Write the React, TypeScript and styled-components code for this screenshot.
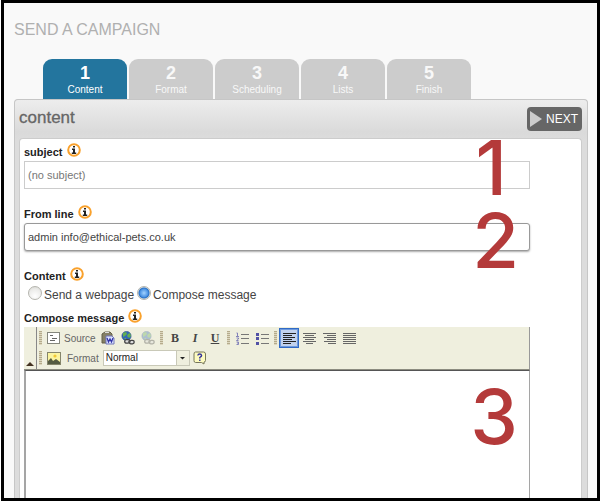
import React, { useState } from "react";
import styled, { createGlobalStyle } from "styled-components";

const GlobalStyle = createGlobalStyle`
  *, *::before, *::after { box-sizing: border-box; }
  body { margin: 0; background: #fff; font-family: "Liberation Sans", Arial, sans-serif; color: #444; }
  button, input, select, textarea { font-family: inherit; margin: 0; }
`;

const Page = styled.div`
  position: relative;
  display: flex;
  flex-direction: column;
  min-height: 100vh;
  margin-left: 1px;
  border: 3px solid #000;
  background: #f9f9f9;
  padding: 0 9px 0 10px;
`;

const Title = styled.h1`
  margin: 0;
  padding: 16px 0 0;
  height: 56px;
  font-size: 16px;
  line-height: 22px;
  font-weight: 400;
  color: #b0b0b0;
`;

const Tabs = styled.nav`
  display: flex;
  gap: 2px;
  padding-left: 29px;
`;

const Tab = styled.button<{ $active: boolean }>`
  display: flex;
  flex-direction: column;
  align-items: center;
  width: 84px;
  height: 40px;
  padding: 4px 0 0;
  border: 0;
  border-radius: 9px 9px 0 0;
  background: ${(p) => (p.$active ? "#23759e" : "#ccc")};
  color: ${(p) => (p.$active ? "#fff" : "#f8f8f8")};
  font-size: 10px;
  line-height: 14px;
`;

const TabNumber = styled.strong`
  font-size: 18px;
  line-height: 20px;
`;

const Panel = styled.section`
  flex: 1;
  display: flex;
  flex-direction: column;
  border: 1px solid #c6c6c6;
  border-bottom: 0;
  border-radius: 4px 4px 0 0;
  background: #dcdcdc linear-gradient(#ededed, #dadada 32px, #dcdcdc 40px) no-repeat;
  padding: 0 5px 0 4px;
`;

const PanelHeader = styled.header`
  display: flex;
  align-items: center;
  justify-content: space-between;
  height: 38px;
`;

const PanelTitle = styled.h2`
  margin: 0;
  padding-bottom: 3px;
  font-size: 17px;
  line-height: 20px;
  font-weight: 400;
  color: #666;
  -webkit-text-stroke: 0.3px #666;
`;

const NextButton = styled.button`
  display: flex;
  align-items: center;
  gap: 4px;
  height: 24px;
  padding: 0 4px 0 3px;
  border: 0;
  border-radius: 4px;
  background: #666;
  color: #fff;
  font-size: 12px;
`;

const Form = styled.form`
  flex: 1;
  display: flex;
  flex-direction: column;
  border: 1px solid #ccc;
  border-bottom: 0;
  border-radius: 4px 4px 0 0;
  background: #fff;
  padding: 0 51px 0 4px;
`;

const Field = styled.div`
  margin-bottom: 12px;
`;

const LabelRow = styled.div`
  display: flex;
  align-items: center;
  gap: 4px;
  height: 22px;
`;

const Label = styled.label`
  padding-top: 3px;
  font-size: 11px;
  line-height: 14px;
  font-weight: 700;
  color: #222;
`;

const InfoButton = styled.button`
  display: flex;
  padding: 0;
  border: 0;
  background: none;
`;

const TextInput = styled.input<{ $strong?: boolean }>`
  display: block;
  width: 100%;
  height: 28px;
  padding: 0 3px;
  border: 1px solid ${(p) => (p.$strong ? "#999" : "#ccc")};
  border-radius: ${(p) => (p.$strong ? "3px" : "0")};
  box-shadow: ${(p) => (p.$strong ? "0 1px 2px #aaa" : "none")};
  outline: 0;
  background: #fff;
  font-size: 11px;
  color: #444;
  &::placeholder { color: #777; }
`;

const Choices = styled.div`
  display: flex;
  gap: 3px;
  height: 20px;
  padding-left: 4px;
`;

const Choice = styled.label`
  display: flex;
  align-items: center;
  gap: 2px;
  font-size: 12px;
`;

const Radio = styled.input`
  appearance: none;
  width: 14px;
  height: 14px;
  margin-bottom: 4px;
  border: 1px solid #b5b5ae;
  border-radius: 50%;
  background: radial-gradient(circle at 50% 75%, #fff, #ececea 60%, #d5d5d0);
  &:checked {
    background: radial-gradient(circle, #a3d3ff 0, #4b93e4 4px, #286fc4 5px, #dce4e4 6px);
  }
`;

const Editor = styled.div`
  flex: 1;
  display: flex;
  flex-direction: column;
`;

const Toolbar = styled.div`
  display: flex;
  height: 43px;
  border-right: 1px solid #999;
  border-bottom: 1px solid #8c8c80;
  background: #efefde;
`;

const Collapse = styled.button`
  display: flex;
  align-items: flex-end;
  width: 13px;
  padding: 0 0 2px 2px;
  border: 0;
  border-right: 1px solid #888;
  background: none;
`;

const ToolRows = styled.div`
  padding-top: 1px;
`;

const ToolRow = styled.div`
  display: flex;
  align-items: center;
  height: 20px;
`;

const Grip = styled.span`
  width: 7px;
  height: 14px;
  padding: 0 2px;
  background: repeating-linear-gradient(#b5ab8c 0 1px, #ddd8c0 1px 2px) content-box;
`;

const Tool = styled.button<{ $active?: boolean }>`
  display: flex;
  align-items: center;
  justify-content: center;
  width: 20px;
  height: 20px;
  padding: 0;
  border: 1px solid ${(p) => (p.$active ? "#316ac5" : "transparent")};
  background: ${(p) => (p.$active ? "#c1d2ee" : "none")};
  box-shadow: ${(p) => (p.$active ? "inset 0 0 0 1px #6d9ade" : "none")};
`;

const SourceTool = styled(Tool)`
  width: 54px;
  gap: 4px;
  justify-content: flex-start;
  padding-left: 2px;
  font-size: 10px;
  color: #666;
`;

const Letter = styled.span<{ $kind: "bold" | "italic" | "underline" }>`
  font: 700 12px "Liberation Serif", serif;
  color: #444;
  font-style: ${(p) => (p.$kind === "italic" ? "italic" : "normal")};
  text-decoration: ${(p) => (p.$kind === "underline" ? "underline" : "none")};
`;

const FormatLabel = styled.label`
  padding: 0 4px 0 3px;
  font-size: 10px;
  color: #666;
`;

const SelectBox = styled.div`
  display: grid;
  width: 87px;
  height: 16px;
  border: 1px solid #c9c9b8;
  background: #fff;
`;

const FormatSelect = styled.select`
  grid-area: 1 / 1;
  appearance: none;
  width: 100%;
  border: 0;
  padding: 0 2px;
  background: linear-gradient(#efefde, #efefde) right / 13px 100% no-repeat;
  font-size: 10px;
  line-height: 14px;
  color: #222;
`;

const SelectArrow = styled.svg`
  grid-area: 1 / 1;
  justify-self: end;
  pointer-events: none;
`;

const Body = styled.textarea`
  display: block;
  flex: 1;
  width: 100%;
  min-height: 100px;
  resize: none;
  border: solid #a5a5a5;
  border-width: 1px 1px 0 2px;
  border-top-color: #555;
  outline: 0;
  background: #fff;
`;

const Callout = styled.span<{ $top: number; $right: number }>`
  position: absolute;
  top: ${(p) => p.$top}px;
  right: ${(p) => p.$right}px;
  font: 500 76px/56px Inter, "Liberation Sans", sans-serif;
  color: #b43a3a;
  pointer-events: none;
`;

const Info = ({ about }: { about: string }) => (
  <InfoButton type="button" aria-label={`About ${about}`}>
    <svg width="14" height="14" viewBox="0 0 14 14">
      <circle cx="7" cy="7" r="5.8" fill="#fff" stroke="#f9a12c" strokeWidth="2" />
      <path d="M6 3h2v1.6H6zM5 5.6h3v4h1.2V11H4.800V9.600H6V7H5z" fill="#222" />
    </svg>
  </InfoButton>
);

const SourceIcon = () => (
  <svg width="13" height="12" viewBox="0 0 13 12">
    <rect x=".5" y=".5" width="12" height="11" fill="#fff" stroke="#85877d" />
    <path d="M3 3.5h3M5 6.5h5M3 8.5h5" stroke="#666" />
  </svg>
);

const PasteWordIcon = () => (
  <svg width="14" height="14" viewBox="0 0 14 14">
    <path d="M1 3l3-2h5l2 2v9H1z" fill="#858065" stroke="#625e48" />
    <path d="M4 1.5h4" stroke="#ddd" />
    <path d="M5 5h6l2 2v6H5z" fill="#dce3ff" stroke="#7378b8" />
    <path d="M6 7l1.5 4L9 8l1.5 3L12 7" fill="none" stroke="#3537ab" strokeWidth="1.3" />
  </svg>
);

const LinkIcon = ({ faded }: { faded?: boolean }) => (
  <svg width="14" height="14" viewBox="0 0 14 14" opacity={faded ? 0.35 : 1}>
    <circle cx="5.5" cy="5" r="4.6" fill="#3168b6" stroke="#244987" strokeWidth=".6" />
    <path d="M2 2l3-1 1 2-2 2-2 1zM7 3l2-1 1 3-2 2-2-2zM3 7l2 0v2z" fill="#61af50" />
    <rect x="3.7" y="8.7" width="5" height="3.5" rx="1.7" fill="#ddd" stroke="#444" strokeWidth="1.3" />
    <rect x="8.2" y="9.3" width="5" height="3.5" rx="1.7" fill="#ddd" stroke="#444" strokeWidth="1.3" />
    <path d="M7 10.8h3" stroke="#555" />
  </svg>
);

const ListIcon = ({ numbered }: { numbered?: boolean }) => (
  <svg width="13" height="13" viewBox="0 0 13 13">
    <path d="M5 2.5h8M5 6.5h8M5 11.5h8" stroke="#777" />
    {numbered ? (
      <path d="M.5 1h1v3M0 4.5h3M.5 6h2v1l-2 1.5h2M.5 10h2v2.5h-2M1 11h1" fill="none" stroke="#7777b5" strokeWidth=".9" />
    ) : (
      <path d="M0 1h3v3H0zM0 5h3v3H0zM0 10h3v3H0z" fill="#5151a5" />
    )}
  </svg>
);

const alignPaths = {
  left: "M0 1.5h13M0 3.5h9M0 5.5h12M0 7.5h9M0 9.5h13M0 11.5h8",
  center: "M0 1.5h13M2 3.5h9M0 5.5h13M2 7.5h9M0 9.5h13M3 11.5h7",
  right: "M0 1.5h13M4 3.5h9M1 5.5h12M4 7.5h9M1 9.5h12M5 11.5h8",
  justify: "M0 1.5h13M0 3.5h13M0 5.5h13M0 7.5h13M0 9.5h13M0 11.5h13",
};

type Align = keyof typeof alignPaths;

const AlignIcon = ({ align, dark }: { align: Align; dark: boolean }) => (
  <svg width="13" height="13" viewBox="0 0 13 13">
    <path d={alignPaths[align]} stroke={dark ? "#222" : "#666"} />
  </svg>
);

const ImageIcon = () => (
  <svg width="14" height="13" viewBox="0 0 14 13">
    <rect x=".5" y=".5" width="13" height="12" fill="#fbf4a0" stroke="#85856b" />
    <circle cx="8" cy="4" r="1.6" fill="#f1c834" />
    <path d="M1 12V9l3-3 2 3 3-2 4 3v2z" fill="#555b42" />
  </svg>
);

const HelpIcon = () => (
  <svg width="14" height="14" viewBox="0 0 14 14">
    <path d="M2.500 1h8Q12.500 1 12.500 3v6.500Q12.500 11 11 11v2L8.500 11.500h-6Q1 11.500 1 9.500V3Q1 1 2.500 1z" fill="#fdfbc0" stroke="#77775b" />
    <path d="M4.800 4.500Q5 3 6.700 3T8.600 4.700Q8.500 5.500 6.800 6.500v1M6.800 8.500v1.500" fill="none" stroke="#33339b" strokeWidth="1.400" />
  </svg>
);

const steps = ["Content", "Format", "Scheduling", "Lists", "Finish"];
const alignments: Align[] = ["left", "center", "right", "justify"];

export default function App() {
  const [step, setStep] = useState(0);
  const [mode, setMode] = useState("compose");
  const [align, setAlign] = useState<Align>("left");

  return (
    <>
      <GlobalStyle />
      <Page>
        <Title>SEND A CAMPAIGN</Title>
        <Tabs aria-label="Campaign steps">
          {steps.map((name, i) => (
            <Tab key={name} type="button" $active={i === step} onClick={() => setStep(i)}>
              <TabNumber>{i + 1}</TabNumber>
              {name}
            </Tab>
          ))}
        </Tabs>
        <Panel>
          <PanelHeader>
            <PanelTitle>content</PanelTitle>
            <NextButton type="button">
              <svg width="12" height="16" viewBox="0 0 12 16">
                <path d="M0 0l12 8L0 16z" fill="#ccc" />
              </svg>
              NEXT
            </NextButton>
          </PanelHeader>
          <Form onSubmit={(e) => e.preventDefault()}>
            <Field>
              <LabelRow>
                <Label htmlFor="subject">subject</Label>
                <Info about="subject" />
              </LabelRow>
              <TextInput id="subject" placeholder="(no subject)" />
            </Field>
            <Field>
              <LabelRow>
                <Label htmlFor="from">From line</Label>
                <Info about="from line" />
              </LabelRow>
              <TextInput id="from" $strong autoFocus defaultValue="admin info@ethical-pets.co.uk" />
            </Field>
            <LabelRow>
              <Label as="span" id="content-kind">Content</Label>
              <Info about="content" />
            </LabelRow>
            <Choices role="radiogroup" aria-labelledby="content-kind">
              <Choice>
                <Radio type="radio" name="mode" checked={mode === "webpage"} onChange={() => setMode("webpage")} />
                Send a webpage
              </Choice>
              <Choice>
                <Radio type="radio" name="mode" checked={mode === "compose"} onChange={() => setMode("compose")} />
                Compose message
              </Choice>
            </Choices>
            <LabelRow>
              <Label htmlFor="message">Compose message</Label>
              <Info about="compose message" />
            </LabelRow>
            <Editor>
              <Toolbar role="toolbar" aria-label="Formatting">
                <Collapse type="button" aria-label="Collapse toolbar">
                  <svg width="8" height="5" viewBox="0 0 8 5">
                    <path d="M4 0l4 4H0z" fill="#432" />
                  </svg>
                </Collapse>
                <ToolRows>
                  <ToolRow>
                    <Grip />
                    <SourceTool type="button"><SourceIcon />Source</SourceTool>
                    <Tool type="button" aria-label="Paste from Word"><PasteWordIcon /></Tool>
                    <Tool type="button" aria-label="Link"><LinkIcon /></Tool>
                    <Tool type="button" aria-label="Unlink"><LinkIcon faded /></Tool>
                    <Grip />
                    <Tool type="button"><Letter $kind="bold">B</Letter></Tool>
                    <Tool type="button"><Letter $kind="italic">I</Letter></Tool>
                    <Tool type="button"><Letter $kind="underline">U</Letter></Tool>
                    <Grip />
                    <Tool type="button" aria-label="Numbered list"><ListIcon numbered /></Tool>
                    <Tool type="button" aria-label="Bulleted list"><ListIcon /></Tool>
                    <Grip />
                    {alignments.map((a) => (
                      <Tool key={a} type="button" aria-label={`Align ${a}`} $active={a === align} onClick={() => setAlign(a)}>
                        <AlignIcon align={a} dark={a === align} />
                      </Tool>
                    ))}
                  </ToolRow>
                  <ToolRow>
                    <Grip />
                    <Tool type="button" aria-label="Image"><ImageIcon /></Tool>
                    <FormatLabel htmlFor="format">Format</FormatLabel>
                    <SelectBox>
                      <FormatSelect id="format" defaultValue="Normal">
                        <option>Normal</option>
                        <option>Heading</option>
                      </FormatSelect>
                      <SelectArrow width="13" height="14" viewBox="0 0 13 14">
                        <path d="M.5 0v14" stroke="#c9c9b8" />
                        <path d="M4 6h5L6.500 8.500z" fill="#222" />
                      </SelectArrow>
                    </SelectBox>
                    <Tool type="button" aria-label="Help"><HelpIcon /></Tool>
                  </ToolRow>
                </ToolRows>
              </Toolbar>
              <Body id="message" />
            </Editor>
          </Form>
        </Panel>
        <Callout $top={136} $right={90}>1</Callout>
        <Callout $top={209} $right={78}>2</Callout>
        <Callout $top={385} $right={79}>3</Callout>
      </Page>
    </>
  );
}
